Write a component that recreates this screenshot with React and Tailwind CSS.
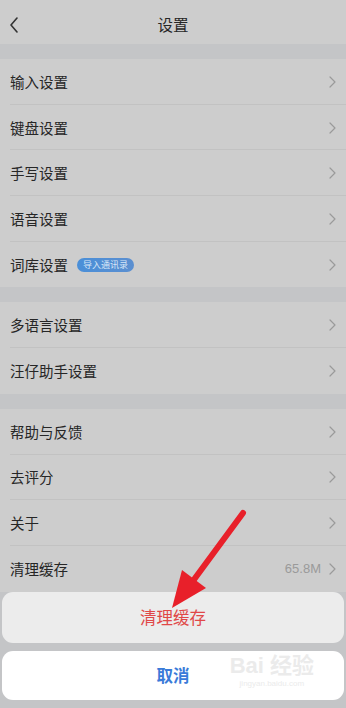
import React from "react";

const font = { fontFamily: '"Noto Sans CJK SC", "Noto Sans", sans-serif' };

const Chevron = () => (
  <svg width="7" height="12" viewBox="0 0 7 12" className="shrink-0">
    <path d="M1 1l5 5-5 5" fill="none" stroke="#9a9a9a" strokeWidth="1.2" strokeLinecap="round" strokeLinejoin="round" />
  </svg>
);

const Row = ({ label, badge, value, last }) => (
  <div className="relative flex h-[45.7px] items-center pl-[10px] pr-[10px] bg-[#cdcdcd]">
    <span className="text-[14.5px] text-[#262626]">{label}</span>
    {badge && (
      <span className="ml-[9px] rounded-full bg-gradient-to-r from-[#4a8fd8] to-[#5b8fd0] px-[6px] py-[1px] text-[9px] leading-[12px] text-[#d6e6f7]">
        {badge}
      </span>
    )}
    <div className="ml-auto flex items-center gap-[8px]">
      {value && <span className="text-[13px] text-[#9a9a9a]" style={{ fontFamily: '"Liberation Sans", sans-serif' }}>{value}</span>}
      <Chevron />
    </div>
    {!last && <div className="absolute bottom-0 left-[10px] right-0 h-px bg-[#c2c2c2]" />}
  </div>
);

const Group = ({ items }) => (
  <div>
    {items.map((it, i) => (
      <Row key={it.label} {...it} last={i === items.length - 1} />
    ))}
  </div>
);

export default function App() {
  const groups = [
    [
      { label: "输入设置" },
      { label: "键盘设置" },
      { label: "手写设置" },
      { label: "语音设置" },
      { label: "词库设置", badge: "导入通讯录" },
    ],
    [{ label: "多语言设置" }, { label: "汪仔助手设置" }],
    [{ label: "帮助与反馈" }, { label: "去评分" }, { label: "关于" }, { label: "清理缓存", value: "65.8M" }],
  ];

  return (
    <div className="relative h-[708px] w-[346px] overflow-hidden bg-[#c4c5c7]" style={font}>
      <div className="flex h-[44px] items-center bg-[#cdcdcd] px-[9px] pt-[6px]">
        <svg width="10" height="16" viewBox="0 0 10 16">
          <path d="M8 1L2 8l6 7" fill="none" stroke="#333" strokeWidth="1.6" strokeLinecap="round" strokeLinejoin="round" />
        </svg>
        <span className="flex-1 pr-[10px] text-center text-[15.5px] text-[#262626]">设置</span>
      </div>
      <div className="mt-[15px] flex flex-col gap-[15px]">
        {groups.map((g, i) => (
          <Group key={i} items={g} />
        ))}
      </div>

      {/* action sheet */}
      <div className="absolute bottom-[8px] left-[2px] right-[2px] flex flex-col gap-[8px]">
        <div className="flex h-[51px] items-center justify-center rounded-[11px] bg-[#ececec]">
          <span className="text-[16.5px] text-[#e04848]">清理缓存</span>
        </div>
        <div className="relative flex h-[49px] items-center justify-center rounded-[11px] bg-white">
          <span className="text-[16.5px] font-bold text-[#3a7bd9]">取消</span>
          <div className="absolute right-[30px] top-[4px] flex flex-col items-center leading-none text-[#ebebeb]">
            <span className="text-[22px] font-bold" style={{ fontFamily: '"Liberation Sans", "Noto Sans CJK SC", sans-serif' }}>Bai 经验</span>
            <span className="mt-[3px] text-[8px]" style={{ fontFamily: '"Liberation Sans", sans-serif' }}>jingyan.baidu.com</span>
          </div>
        </div>
      </div>

      {/* annotation arrow */}
      <svg className="pointer-events-none absolute left-0 top-0" width="346" height="708">
        <line x1="243" y1="513" x2="190" y2="585" stroke="#e8202a" strokeWidth="6" strokeLinecap="round" />
        <polygon points="172,608 206,588 182,570" fill="#e8202a" />
      </svg>
    </div>
  );
}
